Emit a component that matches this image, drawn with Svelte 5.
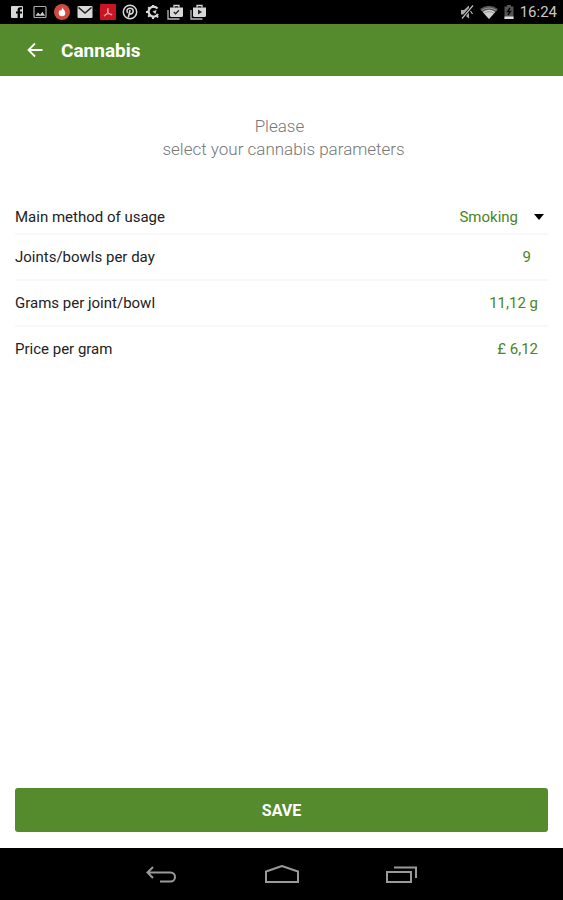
<script>
  let method = $state('Smoking');
  let perDay = $state('9');
  let grams = $state('11,12 g');
  let price = $state('£ 6,12');
</script>

<div class="screen">
  <div class="status">
    <div class="notices">
      <svg viewBox="0 0 16 16"><path fill="#d8d8d8" d="M3 2h10a1 1 0 0 1 1 1v10a1 1 0 0 1-1 1h-2V9.600h2V7.500h-2V6c0-.5.3-.8.8-.8H13V3.200h-2C9.300 3.200 8.600 4.300 8.600 6v1.500H7v2.100h1.600V14H3a1 1 0 0 1-1-1V3a1 1 0 0 1 1-1z" /></svg>
      <svg viewBox="0 0 16 16"><rect x="2" y="2.500" width="12" height="11" rx="1" fill="none" stroke="#aaa" stroke-width="1.200" /><path fill="#d0d0d0" d="M3.500 11.800l2.600-3.300 2 2.200 2.300-3 2.600 4.100z" /></svg>
      <svg viewBox="0 0 16 16"><circle cx="8" cy="8" r="8" fill="#d2493f" /><path fill="#fff" d="M8.300 3c.3 2 3 3.500 3 6a3.300 3.300 0 0 1-6.600 0c0-1.500.8-2.200 1.400-3.200l.8 1C7.800 5.800 8.400 4.500 8.300 3z" /></svg>
      <svg viewBox="0 0 16 16"><rect x="0.500" y="2" width="15" height="12" rx="1" fill="#d8d8d8" /><path d="M1.500 3.500L8 9l6.500-5.500" fill="none" stroke="#222" stroke-width="1.600" /></svg>
      <svg viewBox="0 0 16 16"><rect width="16" height="16" rx="1" fill="#cb1422" /><path d="M8 4.500c-1.200 0-.5 2.500.2 3.700.9 1.600 3 3.300 3.700 2.700.9-.8-2.400-1.300-4.200-1-1.700.3-3.900 1.200-3.500 1.900.7 1 3-2.300 3.700-4.300C8.300 6 8.600 4.500 8 4.500z" fill="none" stroke="#f0b8bc" stroke-width=".9" /></svg>
      <svg viewBox="0 0 16 16"><circle cx="8" cy="8" r="6.700" fill="none" stroke="#d8d8d8" stroke-width="1.500" /><path d="M6.300 13.500L8.100 6M5.600 9C4 6.500 5.500 4.200 8 4.200c2.200 0 3.400 1.400 3.200 3.200-.2 2.200-2.800 3.600-3.900 1.800" fill="none" stroke="#d8d8d8" stroke-width="1.600" /></svg>
      <svg viewBox="0 0 16 16"><path d="M12.500 4.500A5 5 0 1 0 13 10" fill="none" stroke="#d8d8d8" stroke-width="2.200" /><path d="M8 1v2.500M3.200 3.200L5 5M1 8h2.500M3.200 12.800L5 11M8 12.500V15M11 11l2 2.500" stroke="#d8d8d8" stroke-width="2" /><path d="M7.500 7.500l4-1.500-1 4z" fill="#d8d8d8" /></svg>
      {#each ['M6.800 8l1.800 1.800L12 6.200', 'M8 5.500L12 8 8 10.500z'] as mark, i}
        <svg viewBox="0 0 16 16"><path d="M1 6v9h11.500" fill="none" stroke="#bbb" stroke-width="1.300" /><path d="M7 3.500V1.500h5v2" fill="none" stroke="#d8d8d8" stroke-width="1.300" /><path fill="#d8d8d8" d="M3 3.500h13v8a1.500 1.500 0 0 1-1.500 1.500h-10A1.500 1.500 0 0 1 3 11.500z" /><path d={mark} fill={i ? '#222' : 'none'} stroke="#222" stroke-width={i ? 0 : 1.3} /></svg>
      {/each}
    </div>
    <div class="system">
      <svg class="mute" viewBox="1 0 14 16"><path fill="#aaa" d="M2 6h3l5-4.500v13L5 10.500H2z" /><path d="M14.500 1L2.500 15" stroke="#000" stroke-width="3" /><path d="M14 1.500L3 14.500M11.500 7l2 3" stroke="#bbb" stroke-width="1.200" /></svg>
      <svg class="wifi" viewBox="0 0 18 16"><path fill="#555" d="M9 15L0 5q9-6.500 18 0z" /><path fill="#d0d0d0" d="M9 15L2.700 8q6.300-4.500 12.600 0z" /><path d="M1.500 6.500q7.500-5 15 0M4 9.300q5-3.300 10 0" fill="none" stroke="#999" /></svg>
      <svg class="battery" viewBox="0 0 10 16"><path fill="#555" d="M3 1h4v1.500h2.500V15h-9V2.500H3z" /><path d="M6 4L3.500 7.500h3L4 11" fill="none" stroke="#000" stroke-width="1.300" /><path fill="#ddd" d="M.5 12.500h9V15h-9z" /></svg>
      <time>16:24</time>
    </div>
  </div>

  <header>
    <button class="back" aria-label="Back">
      <svg viewBox="0 0 16 16"><path d="M15.500 8H2M8 1.500L1.500 8 8 14.500" fill="none" stroke="#fff" stroke-width="1.800" /></svg>
    </button>
    <h1>Cannabis</h1>
  </header>

  <main>
    <p>Please&nbsp;<br />&nbsp;select your cannabis parameters</p>
    <form id="parameters" onsubmit={(e) => e.preventDefault()}>
      <div class="row first">
        <label for="method">Main method of usage</label>
        <div class="pick">
          <select id="method" bind:value={method}>
            <option>Smoking</option>
          </select>
          <svg viewBox="0 0 10 6"><path d="M0 0h10L5 6z" /></svg>
        </div>
      </div>
      <div class="row">
        <label for="day">Joints/bowls per day</label>
        <input id="day" class="count" bind:value={perDay} />
      </div>
      <div class="row">
        <label for="grams">Grams per joint/bowl</label>
        <input id="grams" bind:value={grams} />
      </div>
      <div class="row">
        <label for="price">Price per gram</label>
        <input id="price" bind:value={price} />
      </div>
    </form>
    <button class="save" form="parameters">SAVE</button>
  </main>

  <nav>
    <button aria-label="Back"><svg viewBox="0 0 36 20"><path d="M9 2L3.500 7.500 9 13M4 7.500h22.500a4.500 4.500 0 0 1 0 9H16" /></svg></button>
    <button aria-label="Home"><svg viewBox="0 0 36 20"><path d="M2 17V6.500L18 1l16 5.500V17z" /></svg></button>
    <button aria-label="Recent apps"><svg viewBox="0 0 36 20"><path d="M3 7h24v10H3zM10 2.500h22V13" /></svg></button>
  </nav>
</div>

<style>
  .screen {
    display: flex;
    flex-direction: column;
    min-height: 100vh;
    background: #fff;
    color: #222;
    font-family: Roboto, 'Liberation Sans', sans-serif;
  }
  button {
    padding: 0;
    border: 0;
    background: none;
    font-family: inherit;
  }
  svg {
    display: block;
    flex: none;
    width: 16px;
    height: 16px;
  }
  .status {
    display: flex;
    justify-content: space-between;
    align-items: center;
    height: 24px;
    padding: 0 6px 0 9px;
    background: #000;
  }
  .notices {
    display: flex;
    justify-content: space-between;
    width: 197px;
  }
  .system {
    display: flex;
    align-items: center;
    gap: 6px;
  }
  .system .mute {
    width: 14px;
  }
  .system .wifi {
    width: 18px;
  }
  .system .battery {
    width: 10px;
  }
  time {
    color: #c8c8c8;
    font-size: 15px;
  }
  header {
    display: flex;
    align-items: center;
    gap: 18px;
    height: 52px;
    padding: 0 27px;
    background: #558b2c;
  }
  h1 {
    margin: 0;
    color: #fff;
    font-size: 19px;
    font-weight: 700;
  }
  main {
    display: flex;
    flex: 1;
    flex-direction: column;
    padding: 39px 15px 16px;
  }
  p {
    margin: 0 0 39px;
    color: #777;
    font-size: 17px;
    font-weight: 300;
    line-height: 23px;
    text-align: center;
  }
  .row {
    display: flex;
    justify-content: space-between;
    align-items: center;
    box-sizing: border-box;
    height: 46px;
    border-bottom: 2px solid #f8f8f8;
    font-size: 15px;
  }
  .row.first {
    height: 35px;
  }
  .row:last-child {
    border-color: transparent;
  }
  .pick {
    display: flex;
    align-items: center;
    gap: 16px;
    padding-right: 4px;
  }
  .pick svg {
    width: 10px;
    height: 6px;
  }
  select,
  input {
    margin: 0;
    padding: 0;
    border: 0;
    outline: 0;
    background: none;
    color: #4b8522;
    font: inherit;
    text-align: right;
  }
  select {
    appearance: none;
  }
  input {
    width: 120px;
    padding-right: 10px;
  }
  .count {
    padding-right: 17px;
  }
  .save {
    height: 44px;
    margin-top: auto;
    border-radius: 3px;
    background: #558b2c;
    color: #fff;
    font-size: 16px;
    font-weight: 700;
  }
  nav {
    display: flex;
    justify-content: center;
    align-items: center;
    gap: 84px;
    box-sizing: border-box;
    height: 52px;
    padding-top: 2px;
    background: #000;
  }
  nav svg {
    width: 36px;
    height: 20px;
    fill: none;
    stroke: #9a9a9a;
    stroke-width: 2;
  }
</style>
